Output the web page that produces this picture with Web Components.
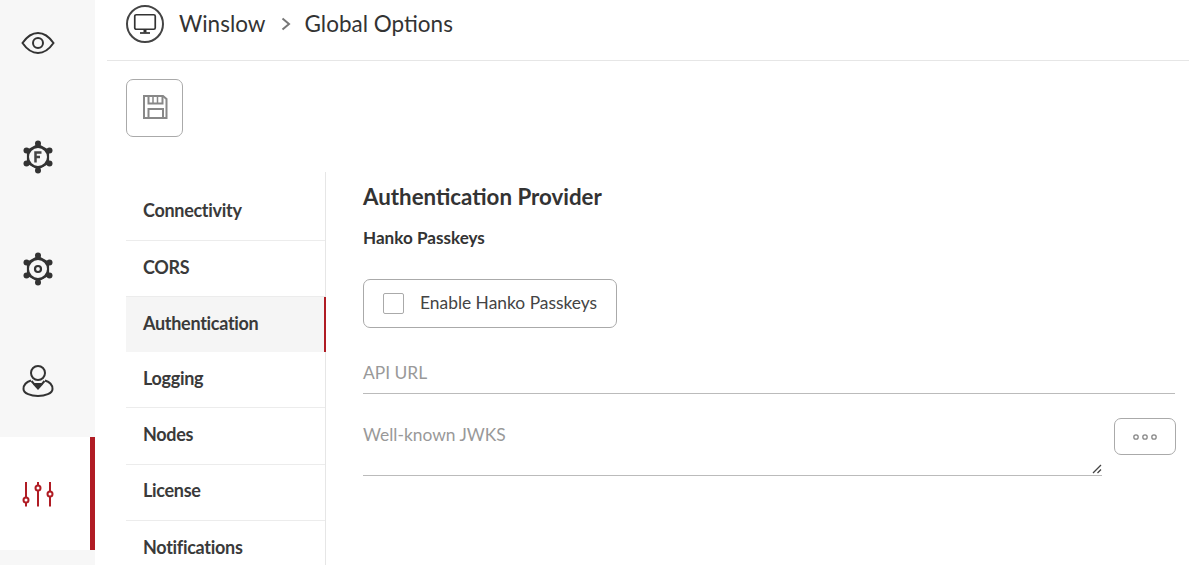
<!doctype html>
<html lang="en">
<head>
  <title>Global Options</title>
  <style>
    html, body { margin: 0; height: 100%; overflow: hidden; background: #fff; }
    body { font-family: Lato, sans-serif; color: #333; }
  </style>
</head>
<body>
  <app-shell>
    <side-item slot="side"><svg viewBox="0 0 34 24" width="34" height="24" fill="none" stroke="#333" stroke-width="2"><path d="M1.500 12C6 5.500 11 2 17 2S28 5.500 32.500 12C28 18.500 23 22 17 22S6 18.500 1.500 12Z"/><circle cx="17" cy="12" r="5"/></svg></side-item>
    <side-item slot="side"><svg style="margin-top:2px" viewBox="0 0 32 34" width="32" height="34" fill="none" stroke="#333"><path stroke-width="2.200" d="M16 5 26 10.500V23L16 28.500 6 23V10.500Z" stroke-linejoin="round"/><circle cx="16" cy="17" r="10" stroke-width="2" fill="#f7f7f7"/><g fill="#333" stroke="none"><circle cx="16" cy="3.500" r="3"/><circle cx="27.500" cy="10.500" r="3"/><circle cx="27.500" cy="23.500" r="3"/><circle cx="16" cy="30.500" r="3"/><circle cx="4.500" cy="23.500" r="3"/><circle cx="4.500" cy="10.500" r="3"/></g><path stroke="#444" stroke-width="2.500" d="M13.500 22.500V12.500H19.500M13.500 17H18"/></svg></side-item>
    <side-item slot="side"><svg style="margin-top:2px" viewBox="0 0 32 34" width="32" height="34" fill="none" stroke="#333"><path stroke-width="2.200" d="M16 5 26 10.500V23L16 28.500 6 23V10.500Z" stroke-linejoin="round"/><circle cx="16" cy="17" r="10" stroke-width="2" fill="#f7f7f7"/><g fill="#333" stroke="none"><circle cx="16" cy="3.500" r="3"/><circle cx="27.500" cy="10.500" r="3"/><circle cx="27.500" cy="23.500" r="3"/><circle cx="16" cy="30.500" r="3"/><circle cx="4.500" cy="23.500" r="3"/><circle cx="4.500" cy="10.500" r="3"/></g><circle cx="16" cy="17" r="3" stroke-width="2.200"/></svg></side-item>
    <side-item slot="side"><svg viewBox="0 0 32 32" width="32" height="32" fill="none" stroke="#333" stroke-width="2"><circle cx="16" cy="8" r="7"/><path d="M9 15.500C4 17 1.500 20 1.500 24C1.500 28.500 9 31 16 31S30.500 28.500 30.500 24C30.500 20 28 17 23 15.500"/><path d="M9.500 16 12 19H20L22.500 16"/><path d="M11 19.500H21L16 25Z" fill="#333" stroke="none"/></svg></side-item>
    <side-item slot="side" active><svg viewBox="0 0 32 26" width="32" height="26" fill="none" stroke="#b01c24" stroke-width="2"><path d="M4 1V16.500M4 21.500V25.500M16 1V4.500M16 9.500V25.500M28 1V10.500M28 15.500V25.500"/><circle cx="4" cy="19" r="2.500"/><circle cx="16" cy="7" r="2.500"/><circle cx="28" cy="13" r="2.500"/></svg></side-item>

    <page-header slot="header"></page-header>

    <tool-button slot="tools" size="save"><svg viewBox="0 0 26 26" width="26" height="26" fill="none" stroke="#888" stroke-width="2"><path d="M2 2H21L24.500 5V24H2Z"/><path d="M6.500 2V9.500H20.500V2" stroke-width="2"/><path d="M11 2V9M15.500 2V9" stroke-width="1.500"/><path d="M6.500 24V15H21V24" stroke-width="2"/></svg></tool-button>

    <nav-list slot="nav">
      <nav-item>Connectivity</nav-item>
      <nav-item>CORS</nav-item>
      <nav-item active>Authentication</nav-item>
      <nav-item>Logging</nav-item>
      <nav-item>Nodes</nav-item>
      <nav-item>License</nav-item>
      <nav-item>Notifications</nav-item>
    </nav-list>

    <auth-panel slot="main"></auth-panel>
  </app-shell>

  <template id="app-shell-template">
    <style>
      :host { display: flex; height: 565px; overflow: hidden; }
      .side { flex: 0 0 95px; width: 95px; background: #f7f7f7; overflow: hidden; }
      .side-inner { margin-top: -13px; }
      .gutter { flex: 0 0 12px; }
      .body { flex: 1; min-width: 0; display: flex; flex-direction: column; }
      .tools { padding: 18px 0 35px 19px; display: flex; }
      .columns { display: flex; flex: 1; min-height: 0; padding-left: 19px; }
      .main { flex: 1; min-width: 0; padding: 0 13px 0 37px; }
    </style>
    <div class="side"><div class="side-inner"><slot name="side"></slot></div></div>
    <div class="gutter"></div>
    <div class="body">
      <slot name="header"></slot>
      <div class="tools"><slot name="tools"></slot></div>
      <div class="columns">
        <slot name="nav"></slot>
        <div class="main"><slot name="main"></slot></div>
      </div>
    </div>
  </template>

  <template id="side-item-template">
    <style>
      :host { display: flex; align-items: center; justify-content: center; height: 112.6px; box-sizing: border-box; padding-right: 19px; }
      :host([active]) { background: #fff; border-right: 5px solid #b01c24; padding-right: 14px; }
      ::slotted(svg) { display: block; }
    </style>
    <slot></slot>
  </template>

  <template id="page-header-template">
    <style>
      :host { display: flex; align-items: center; height: 61px; box-sizing: border-box; border-bottom: 1px solid #e6e6e6; padding: 0 0 12px 19px; font-size: 22.5px; color: #333; }
      .logo { width: 38px; height: 38px; border: 2px solid #444; border-radius: 50%; box-sizing: border-box; display: flex; align-items: center; justify-content: center; margin-right: 15px; }
      .sep { margin: 0 14px 0 15px; display: block; }
      span { margin-bottom: 1px; }
    </style>
    <div class="logo"><svg viewBox="0 0 24 22" width="24" height="22" fill="none" stroke="#333" stroke-width="1.700"><rect x="1.750" y="1.750" width="20.500" height="14.500" rx="1.500"/><path d="M12 16.500V19.500" stroke-width="3"/><path d="M7 20H17"/></svg></div>
    <span>Winslow</span>
    <svg class="sep" viewBox="0 0 10 14" width="10" height="14" fill="none" stroke="#777" stroke-width="2"><path d="M1.500 1.500 8 7 1.500 12.500"/></svg>
    <span>Global Options</span>
  </template>

  <template id="tool-button-template">
    <style>
      :host { display: flex; align-items: center; justify-content: center; box-sizing: border-box; border: 1px solid #aaa; border-radius: 7px; background: #fff; }
      :host([size=save]) { width: 57px; height: 58px; padding-bottom: 3px; }
      :host([size=more]) { width: 62px; height: 37px; }
    </style>
    <slot></slot>
  </template>

  <template id="nav-list-template">
    <style>
      :host { display: block; flex: 0 0 200px; width: 200px; box-sizing: border-box; border-right: 1px solid #e6e6e6; padding-top: 12.8px; }
    </style>
    <slot></slot>
  </template>

  <template id="nav-item-template">
    <style>
      :host { display: flex; align-items: center; box-sizing: border-box; height: 56.2px; padding: 0 0 3.500px 17px; font-size: 18px; font-weight: 700; letter-spacing: -0.3px; color: #3a3a3a; border-bottom: 1px solid #ececec; }
      :host(:first-child) { padding-bottom: 5.5px; }
      :host([active]) { height: 55px; padding-bottom: 3px; background: #f5f5f5; border-bottom: 0; border-right: 2px solid #b01c24; margin-right: -1px; }
    </style>
    <slot></slot>
  </template>

  <template id="auth-panel-template">
    <style>
      :host { display: block; }
      h2 { margin: 0; font-size: 22.3px; line-height: 30px; font-weight: 700; color: #333; padding-top: 10px; }
      h3 { margin: 14px 0 0; font-size: 17.1px; line-height: 24px; font-weight: 700; color: #333; }
      .check { display: inline-flex; align-items: center; box-sizing: border-box; margin-top: 29px; height: 49px; width: 254px; border: 1px solid #aaa; border-radius: 7px; padding-left: 19px; font-size: 17.4px; color: #444; }
      .check span + span { margin-bottom: 2px; }
      .box { width: 21px; height: 21px; box-sizing: border-box; border: 1px solid #aaa; border-radius: 2px; margin-right: 16px; }
      .row { display: flex; align-items: flex-start; }
      .url { box-sizing: border-box; margin: 25px 1px 0 0; height: 41px; border-bottom: 1px solid #bbb; font-size: 17.4px; color: #999; padding-top: 8px; line-height: 24px; }
      .jwks { margin-top: 18px; gap: 12px; }
      .area { position: relative; flex: 1; box-sizing: border-box; height: 64px; border-bottom: 1px solid #bbb; font-size: 17.4px; color: #999; line-height: 24px; padding-top: 11px; }
      .grip { position: absolute; right: 0; bottom: 1px; }
      tool-button { margin-top: 6px; }
      svg { display: block; }
    </style>
    <h2>Authentication Provider</h2>
    <h3>Hanko Passkeys</h3>
    <div class="check"><span class="box"></span><span>Enable Hanko Passkeys</span></div>
    <div class="url">API URL</div>
    <div class="row jwks">
      <div class="area">Well-known JWKS
        <svg class="grip" viewBox="0 0 10 10" width="10" height="10" stroke="#444" stroke-width="1.300"><path d="M1 9 9 1M5.500 9 9 5.500"/></svg>
      </div>
      <tool-button size="more"><svg viewBox="0 0 26 8" width="26" height="8" fill="none" stroke="#888" stroke-width="1.300"><circle cx="4" cy="4" r="2.200"/><circle cx="13" cy="4" r="2.200"/><circle cx="22" cy="4" r="2.200"/></svg></tool-button>
    </div>
  </template>

  <script>
    function defineFromTemplate(name, id) {
      window.customElements.define(name, class extends HTMLElement {
        constructor() {
          super();
          const templ = document.querySelector('#' + id);
          this.attachShadow({mode: 'open'}).appendChild(templ.content.cloneNode(true));
        }
      });
    }
    defineFromTemplate('app-shell', 'app-shell-template');
    defineFromTemplate('side-item', 'side-item-template');
    defineFromTemplate('page-header', 'page-header-template');
    defineFromTemplate('tool-button', 'tool-button-template');
    defineFromTemplate('nav-list', 'nav-list-template');
    defineFromTemplate('nav-item', 'nav-item-template');
    defineFromTemplate('auth-panel', 'auth-panel-template');
  </script>
</body>
</html>
